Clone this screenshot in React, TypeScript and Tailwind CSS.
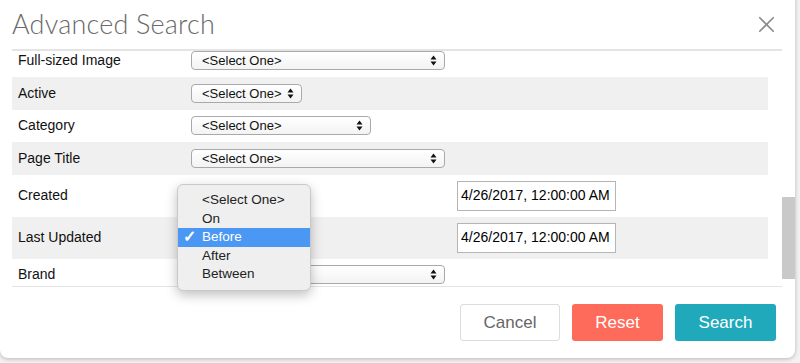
import { X } from "lucide-react";

// ** Rows of the search form
type Row = { label: string; kind: "select" | "date"; width?: string };

const rows: Row[] = [
  { label: "Full-sized Image", kind: "select", width: "w-[254px]" },
  { label: "Active", kind: "select", width: "w-[111px]" },
  { label: "Category", kind: "select", width: "w-[180px]" },
  { label: "Page Title", kind: "select", width: "w-[254px]" },
  { label: "Created", kind: "date" },
  { label: "Last Updated", kind: "date" },
  { label: "Brand", kind: "select", width: "w-[254px]" },
];

const menuItems = ["<Select One>", "On", "Before", "After", "Between"];

const Arrows = () => (
  <svg width="7" height="11" viewBox="0 0 7 11" className="shrink-0">
    <path d="M3.5 0.5 L6.5 4.5 L0.5 4.5 Z" fill="#111" />
    <path d="M3.5 10.5 L6.5 6.5 L0.5 6.5 Z" fill="#111" />
  </svg>
);

const FakeSelect = ({ width }: { width: string }) => (
  <div
    className={`${width} h-[19px] flex items-center justify-between pl-[10px] pr-[7px] rounded-[4px] border border-[#a9a9a9] bg-gradient-to-b from-white to-[#f3f3f3] text-[13px] text-[#111] leading-none`}
  >
    <span>&lt;Select One&gt;</span>
    <Arrows />
  </div>
);

const DateInput = () => (
  <div className="w-[159px] h-[30px] flex items-center px-[3px] border border-[#b5b5b5] bg-white text-[14px] text-black whitespace-nowrap">
    4/26/2017, 12:00:00 AM
  </div>
);

const App = () => {
  return (
    <div className="w-[800px] h-[363px] bg-[#f2f2f2] overflow-hidden font-['Liberation_Sans',Arial,sans-serif]">
      <div className="relative w-[795px] h-[366px] -mt-[8px] bg-white rounded-[8px] shadow-[0_1px_4px_rgba(0,0,0,0.25)] flex flex-col">
        {/* Header */}
        <div className="h-[57px] pt-[8px] pl-[12px] pr-[15px] flex items-center justify-between">
          <h1 className="font-['Lato',sans-serif] font-light text-[27px] text-[#6a6a6a] tracking-[0.2px]">
            Advanced Search
          </h1>
          <X className="w-[27px] h-[27px] text-[#8a8a8a]" strokeWidth={1.5} />
        </div>

        {/* Body */}
        <div className="mx-[12px] w-[770px] border-t-2 border-b border-[#e4e4e4] h-[238px] overflow-hidden">
          <div className="-mt-[6.5px] mr-[14px]">
            {rows.map((row, i) => (
              <div
                key={row.label}
                className={`flex items-center pl-[6px] ${
                  row.kind === "date" ? "h-[42px]" : "h-[32.5px]"
                } ${i % 2 === 1 ? "bg-[#f0f0f0]" : "bg-white"}`}
              >
                <span className="w-[173px] text-[14px] text-[#111]">
                  {row.label}
                </span>
                {row.kind === "select" ? (
                  <FakeSelect width={row.width!} />
                ) : (
                  <div className="flex items-center">
                    <FakeSelect width="w-[111px]" />
                    <div className="ml-[155px]">
                      <DateInput />
                    </div>
                  </div>
                )}
              </div>
            ))}
          </div>
        </div>

        {/* Scrollbar thumb */}
        <div className="absolute left-[782px] top-[205px] w-[13px] h-[82px] bg-[#c9c9c9]" />

        {/* Footer */}
        <div className="flex justify-end gap-[12px] pr-[19px] pt-[17px]">
          <button className="w-[100px] h-[37px] rounded-[3px] border border-[#dcdcdc] bg-white text-[17px] text-[#666]">
            Cancel
          </button>
          <button className="w-[91px] h-[37px] rounded-[3px] bg-[#ff6b5b] text-[17px] text-white">
            Reset
          </button>
          <button className="w-[101px] h-[37px] rounded-[3px] bg-[#1fa9bb] text-[17px] text-white">
            Search
          </button>
        </div>

        {/* Open dropdown menu */}
        <div className="absolute left-[177px] top-[192px] w-[134px] py-[6px] rounded-[6px] border border-[#c9c9c9] bg-[#efefef] shadow-[0_4px_12px_rgba(0,0,0,0.25)] text-[13.5px] text-[#222]">
          {menuItems.map((item) => (
            <div
              key={item}
              className={`h-[18.5px] flex items-center pl-[24px] relative ${
                item === "Before" ? "bg-[#4a97f4] text-white" : ""
              }`}
            >
              {item === "Before" && (
                <span className="absolute left-[5px] text-[16px] font-bold">✓</span>
              )}
              {item}
            </div>
          ))}
        </div>
      </div>
    </div>
  );
};

export default App;
